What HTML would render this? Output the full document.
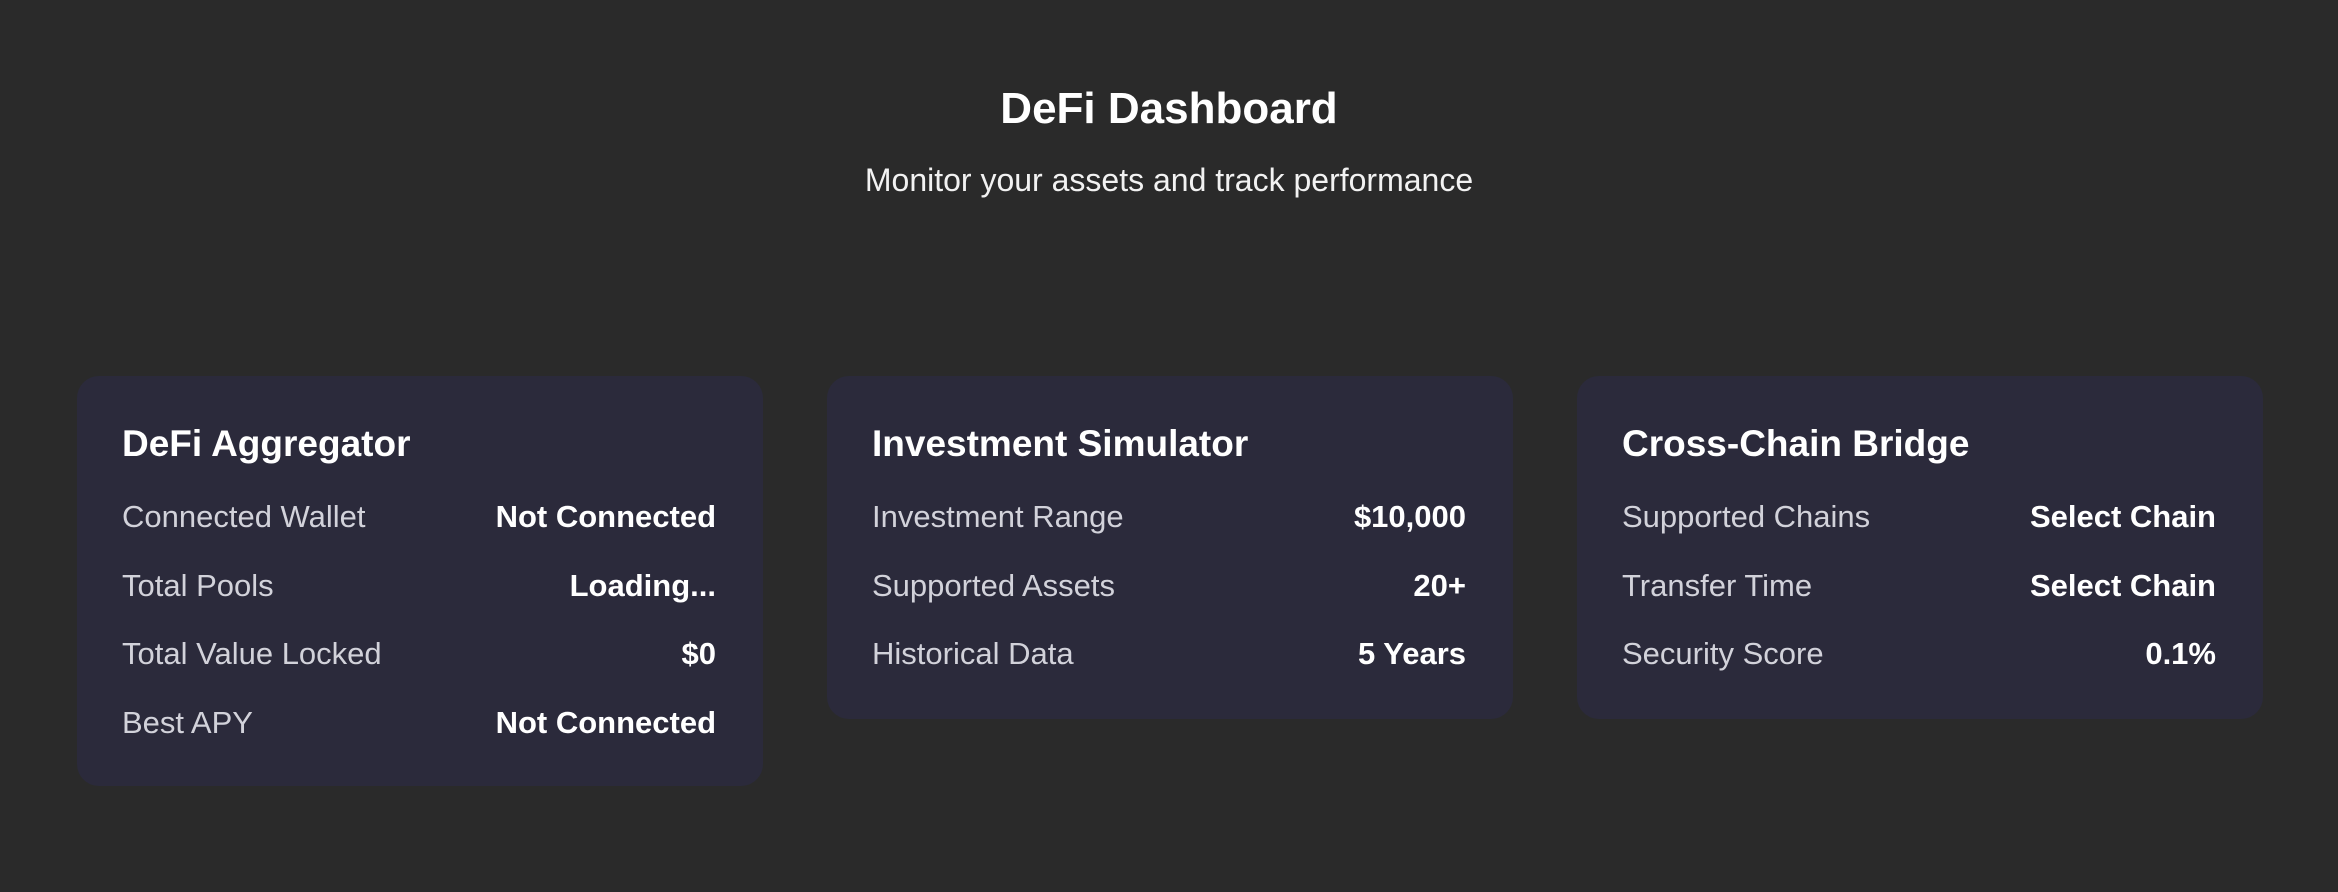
<!DOCTYPE html>
<html><head><style>
html,body{margin:0;padding:0}
body{width:2338px;height:892px;background:#2a2a2a;font-family:"Liberation Sans",sans-serif;color:#fff;position:relative;overflow:hidden}
h1{position:absolute;top:81px;left:0;width:100%;text-align:center;margin:0;font-size:44px;font-weight:600;line-height:56px}
.sub{position:absolute;top:160px;left:0;width:100%;text-align:center;font-size:32px;line-height:40px;color:#f2f2f2}
.card{position:absolute;top:376px;width:686px;background:#2b2a3b;border-radius:22px;box-sizing:border-box;padding:0 47px 0 45px}
.card h2{margin:45px 0 0;font-size:37px;font-weight:700;line-height:46px}
.row{display:flex;justify-content:space-between;font-size:31px;line-height:40px;margin-top:28.5px}
.row.first{margin-top:30px}
.l{color:#d2d2da}
.v{font-weight:700;color:#fff}
</style></head><body>
<h1>DeFi Dashboard</h1>
<div class="sub">Monitor your assets and track performance</div>
<div class="card" style="left:77px;height:410px">
<h2>DeFi Aggregator</h2>
<div class="row first"><span class="l">Connected Wallet</span><span class="v">Not Connected</span></div>
<div class="row"><span class="l">Total Pools</span><span class="v">Loading...</span></div>
<div class="row"><span class="l">Total Value Locked</span><span class="v">$0</span></div>
<div class="row"><span class="l">Best APY</span><span class="v">Not Connected</span></div>
</div>
<div class="card" style="left:827px;height:343px">
<h2>Investment Simulator</h2>
<div class="row first"><span class="l">Investment Range</span><span class="v">$10,000</span></div>
<div class="row"><span class="l">Supported Assets</span><span class="v">20+</span></div>
<div class="row"><span class="l">Historical Data</span><span class="v">5 Years</span></div>
</div>
<div class="card" style="left:1577px;height:343px">
<h2>Cross-Chain Bridge</h2>
<div class="row first"><span class="l">Supported Chains</span><span class="v">Select Chain</span></div>
<div class="row"><span class="l">Transfer Time</span><span class="v">Select Chain</span></div>
<div class="row"><span class="l">Security Score</span><span class="v">0.1%</span></div>
</div>
</body></html>
